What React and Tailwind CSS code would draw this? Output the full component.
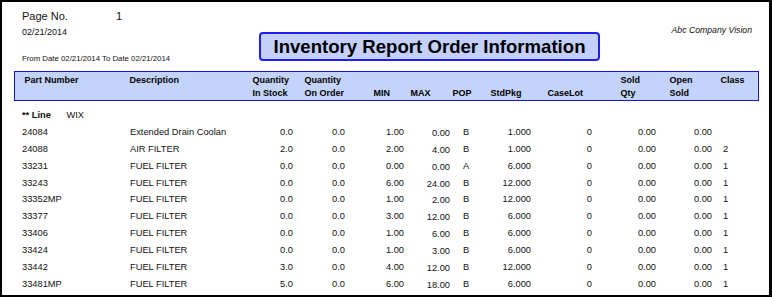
const rows = [
  ["24084", "Extended Drain Coolan", "0.0", "0.0", "1.00", "0.00", "B", "1.000", "0", "0.00", "0.00", ""],
  ["24088", "AIR FILTER", "2.0", "0.0", "2.00", "4.00", "B", "1.000", "0", "0.00", "0.00", "2"],
  ["33231", "FUEL FILTER", "0.0", "0.0", "0.00", "0.00", "A", "6.000", "0", "0.00", "0.00", "1"],
  ["33243", "FUEL FILTER", "0.0", "0.0", "6.00", "24.00", "B", "12.000", "0", "0.00", "0.00", "1"],
  ["33352MP", "FUEL FILTER", "0.0", "0.0", "1.00", "2.00", "B", "12.000", "0", "0.00", "0.00", "1"],
  ["33377", "FUEL FILTER", "0.0", "0.0", "3.00", "12.00", "B", "6.000", "0", "0.00", "0.00", "1"],
  ["33406", "FUEL FILTER", "0.0", "0.0", "1.00", "6.00", "B", "6.000", "0", "0.00", "0.00", "1"],
  ["33424", "FUEL FILTER", "0.0", "0.0", "1.00", "3.00", "B", "6.000", "0", "0.00", "0.00", "1"],
  ["33442", "FUEL FILTER", "3.0", "0.0", "4.00", "12.00", "B", "12.000", "0", "0.00", "0.00", "1"],
  ["33481MP", "FUEL FILTER", "5.0", "0.0", "6.00", "18.00", "B", "6.000", "0", "0.00", "0.00", "1"],
];

// columns after Part Number: data cell class, header cell class, header lines
const cols = [
  { d: "w-[123px] overflow-hidden", h: "w-[123px]", top: "Description", bot: "" },
  { d: "w-[51px] pr-[11px] text-right", h: "w-[51px]", top: "Quantity", bot: "In Stock" },
  { d: "w-[56px] pr-[15px] text-right", h: "w-[56px] pl-[1px]", top: "Quantity", bot: "On Order" },
  { d: "w-[51px] pr-[7px] text-right", h: "w-[51px] pl-[14px]", top: "", bot: "MIN" },
  { d: "w-[41px] pr-[2px] text-right translate-y-[1px]", h: "w-[41px]", top: "", bot: "MAX" },
  { d: "w-[22px] pl-[11px]", h: "w-[22px] pl-[1px]", top: "", bot: "POP" },
  { d: "w-[66px] pr-[9px] text-right", h: "w-[66px] pl-[17px]", top: "", bot: "StdPkg" },
  { d: "w-[70px] pr-[18px] text-right", h: "w-[70px] pl-[8px]", top: "", bot: "CaseLot" },
  { d: "w-[55px] pr-[9px] text-right", h: "w-[55px] pl-[11px]", top: "Sold", bot: "Qty" },
  { d: "w-[53px] pr-[6px] text-right", h: "w-[53px] pl-[5px]", top: "Open", bot: "Sold" },
  { d: "w-[42px] pl-[5px]", h: "w-[42px] pl-[3px]", top: "Class", bot: "" },
];

export default function App() {
  return (
    <div className="h-[297px] w-[772px] overflow-hidden border-2 border-r-[3px] border-black bg-white font-['Liberation_Sans',Arial,sans-serif] text-[#111]">
      {/* report heading */}
      <div className="flex h-[69px]">
        <div className="ml-[20px] w-[237px] shrink-0">
          <div className="mt-[7.5px] flex h-[13px] text-[11px] leading-[13px]">
            <span className="w-[94px]">Page No.</span>
            <span>1</span>
          </div>
          <div className="mt-[4px] h-[11px] text-[9px] leading-[11px]">02/21/2014</div>
          <div className="mt-[16px] h-[10px] whitespace-nowrap text-[7.8px] leading-[10px]">
            From Date 02/21/2014 To Date 02/21/2014
          </div>
        </div>
        <div className="mt-[30px] flex h-[29px] w-[341px] shrink-0 items-center justify-center rounded-[4px] border-2 border-[#2020ee] bg-[#c3d0fc] text-[18.6px] font-bold text-black">
          Inventory Report Order Information
        </div>
        <div className="mt-[23px] flex-1 pr-[17px] text-right text-[8.7px] italic leading-[10px]">
          Abc Company Vision
        </div>
      </div>

      {/* column header band */}
      <div className="ml-[12px] flex h-[30px] w-[745px] border-[1.5px] border-[#1414e0] bg-[#c4d3f9] pt-[2px] text-[9px] font-bold leading-[13px] text-black">
        <div className="w-[114.5px] shrink-0 pl-[9.5px]">Part Number</div>
        {cols.map((c, i) => (
          <div key={i} className={`shrink-0 whitespace-nowrap ${c.h}`}>
            <div className="h-[13px]">{c.top}</div>
            <div className="h-[13px]">{c.bot}</div>
          </div>
        ))}
      </div>

      {/* rows */}
      <div className="ml-[20px] mt-[7.5px] text-[9.3px]">
        <div className="flex h-[15px] items-center">
          <span className="w-[44.5px] font-bold">** Line</span>
          <span>WIX</span>
        </div>
        {rows.map((r, i) => (
          <div key={i} className="flex h-[16.86px] items-center whitespace-nowrap leading-[16px]">
            <div className="w-[108px] shrink-0">{r[0]}</div>
            {cols.map((c, j) => (
              <div key={j} className={`shrink-0 ${c.d}`}>
                {r[j + 1]}
              </div>
            ))}
          </div>
        ))}
      </div>
    </div>
  );
}
